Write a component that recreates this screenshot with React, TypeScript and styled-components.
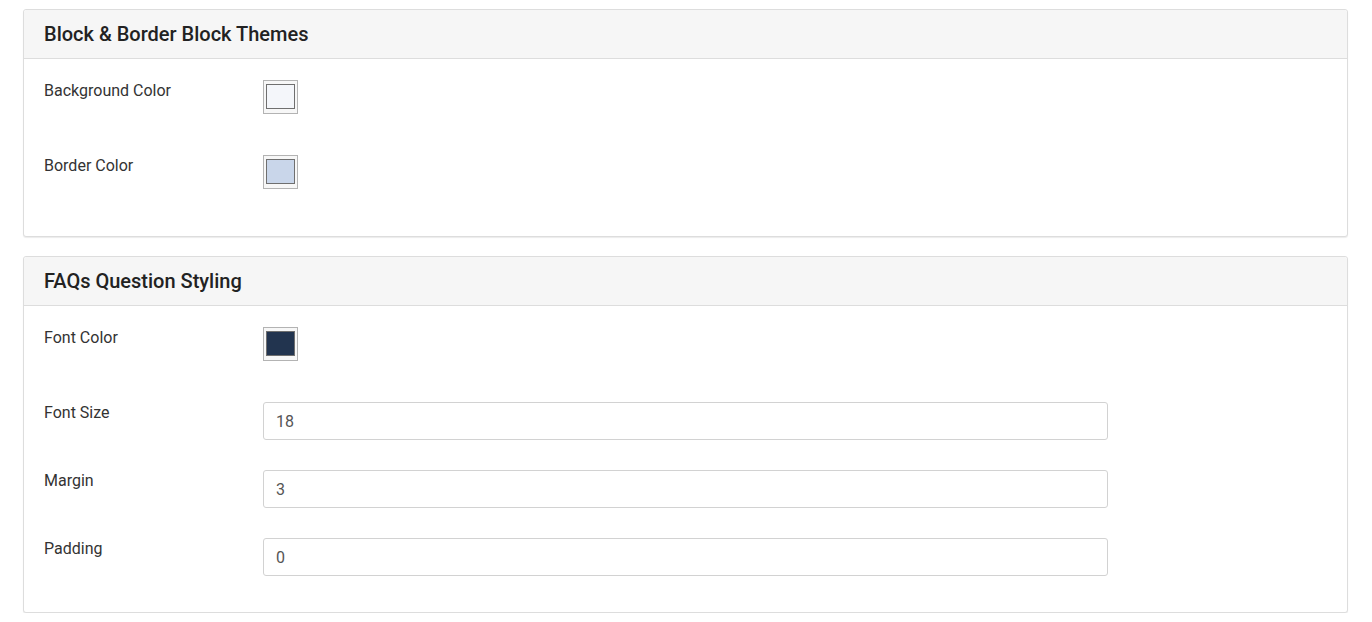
import React from "react";
import styled, { createGlobalStyle } from "styled-components";

const GlobalStyle = createGlobalStyle`
  html, body {
    margin: 0;
    padding: 0;
    background: #ffffff;
  }
  body {
    font-family: Roboto, "Noto Sans", "Liberation Sans", sans-serif;
    color: #333333;
  }
  * { box-sizing: border-box; }
`;

const Page = styled.div`
  display: flex;
  flex-direction: column;
  gap: 19px;
  padding: 9px 24px 0 23px;
`;

const Panel = styled.section`
  background: #ffffff;
  border: 1px solid #dddddd;
  border-radius: 3px;
  box-shadow: 0 1px 1px rgba(0, 0, 0, 0.08);
`;

const PanelHeader = styled.div`
  height: 49px;
  display: flex;
  align-items: center;
  padding: 0 20px;
  background: #f6f6f6;
  border-bottom: 1px solid #dddddd;
  border-radius: 3px 3px 0 0;
`;

const PanelTitle = styled.h3`
  margin: 0;
  font-size: 20px;
  font-weight: 500;
  color: #222222;
  line-height: 1;
`;

const PanelBody = styled.div`
  display: flex;
  flex-direction: column;
  padding: 21px 20px 6px 20px;
`;

const Row = styled.div<{ $tall?: boolean }>`
  display: grid;
  grid-template-columns: 219px 845px;
  align-items: start;
  min-height: ${(p) => (p.$tall ? "45px" : "38px")};
  margin-bottom: 30px;
`;

const Label = styled.label`
  font-size: 16px;
  line-height: 21px;
  color: #333333;
`;

const Swatch = styled.div`
  width: 35px;
  height: 34px;
  border: 1px solid #b3b3b3;
  background: #f7f7f7;
  padding: 3px 2px 4px 2px;
`;

const SwatchFill = styled.div<{ $color: string }>`
  width: 100%;
  height: 100%;
  border: 1px solid #6f6f6f;
  background: ${(p) => p.$color};
`;

const TextInput = styled.input`
  width: 845px;
  height: 38px;
  border: 1px solid #d2d2d2;
  border-radius: 3px;
  padding: 0 12px;
  font-family: Roboto, "Noto Sans", "Liberation Sans", sans-serif;
  font-size: 16px;
  color: #555555;
  background: #ffffff;
  outline: none;
`;

const ColorRow = ({ label, color }: { label: string; color: string }) => (
  <Row $tall>
    <Label>{label}</Label>
    <Swatch>
      <SwatchFill $color={color} />
    </Swatch>
  </Row>
);

const InputRow = ({ label, value }: { label: string; value: string }) => (
  <Row>
    <Label>{label}</Label>
    <TextInput defaultValue={value} />
  </Row>
);

export default function App() {
  return (
    <>
      <GlobalStyle />
      <Page>
        <Panel>
          <PanelHeader>
            <PanelTitle>Block &amp; Border Block Themes</PanelTitle>
          </PanelHeader>
          <PanelBody>
            <ColorRow label="Background Color" color="#f4f6fa" />
            <ColorRow label="Border Color" color="#c9d6ea" />
          </PanelBody>
        </Panel>
        <Panel>
          <PanelHeader>
            <PanelTitle>FAQs Question Styling</PanelTitle>
          </PanelHeader>
          <PanelBody>
            <ColorRow label="Font Color" color="#22344f" />
            <InputRow label="Font Size" value="18" />
            <InputRow label="Margin" value="3" />
            <InputRow label="Padding" value="0" />
          </PanelBody>
        </Panel>
      </Page>
    </>
  );
}
